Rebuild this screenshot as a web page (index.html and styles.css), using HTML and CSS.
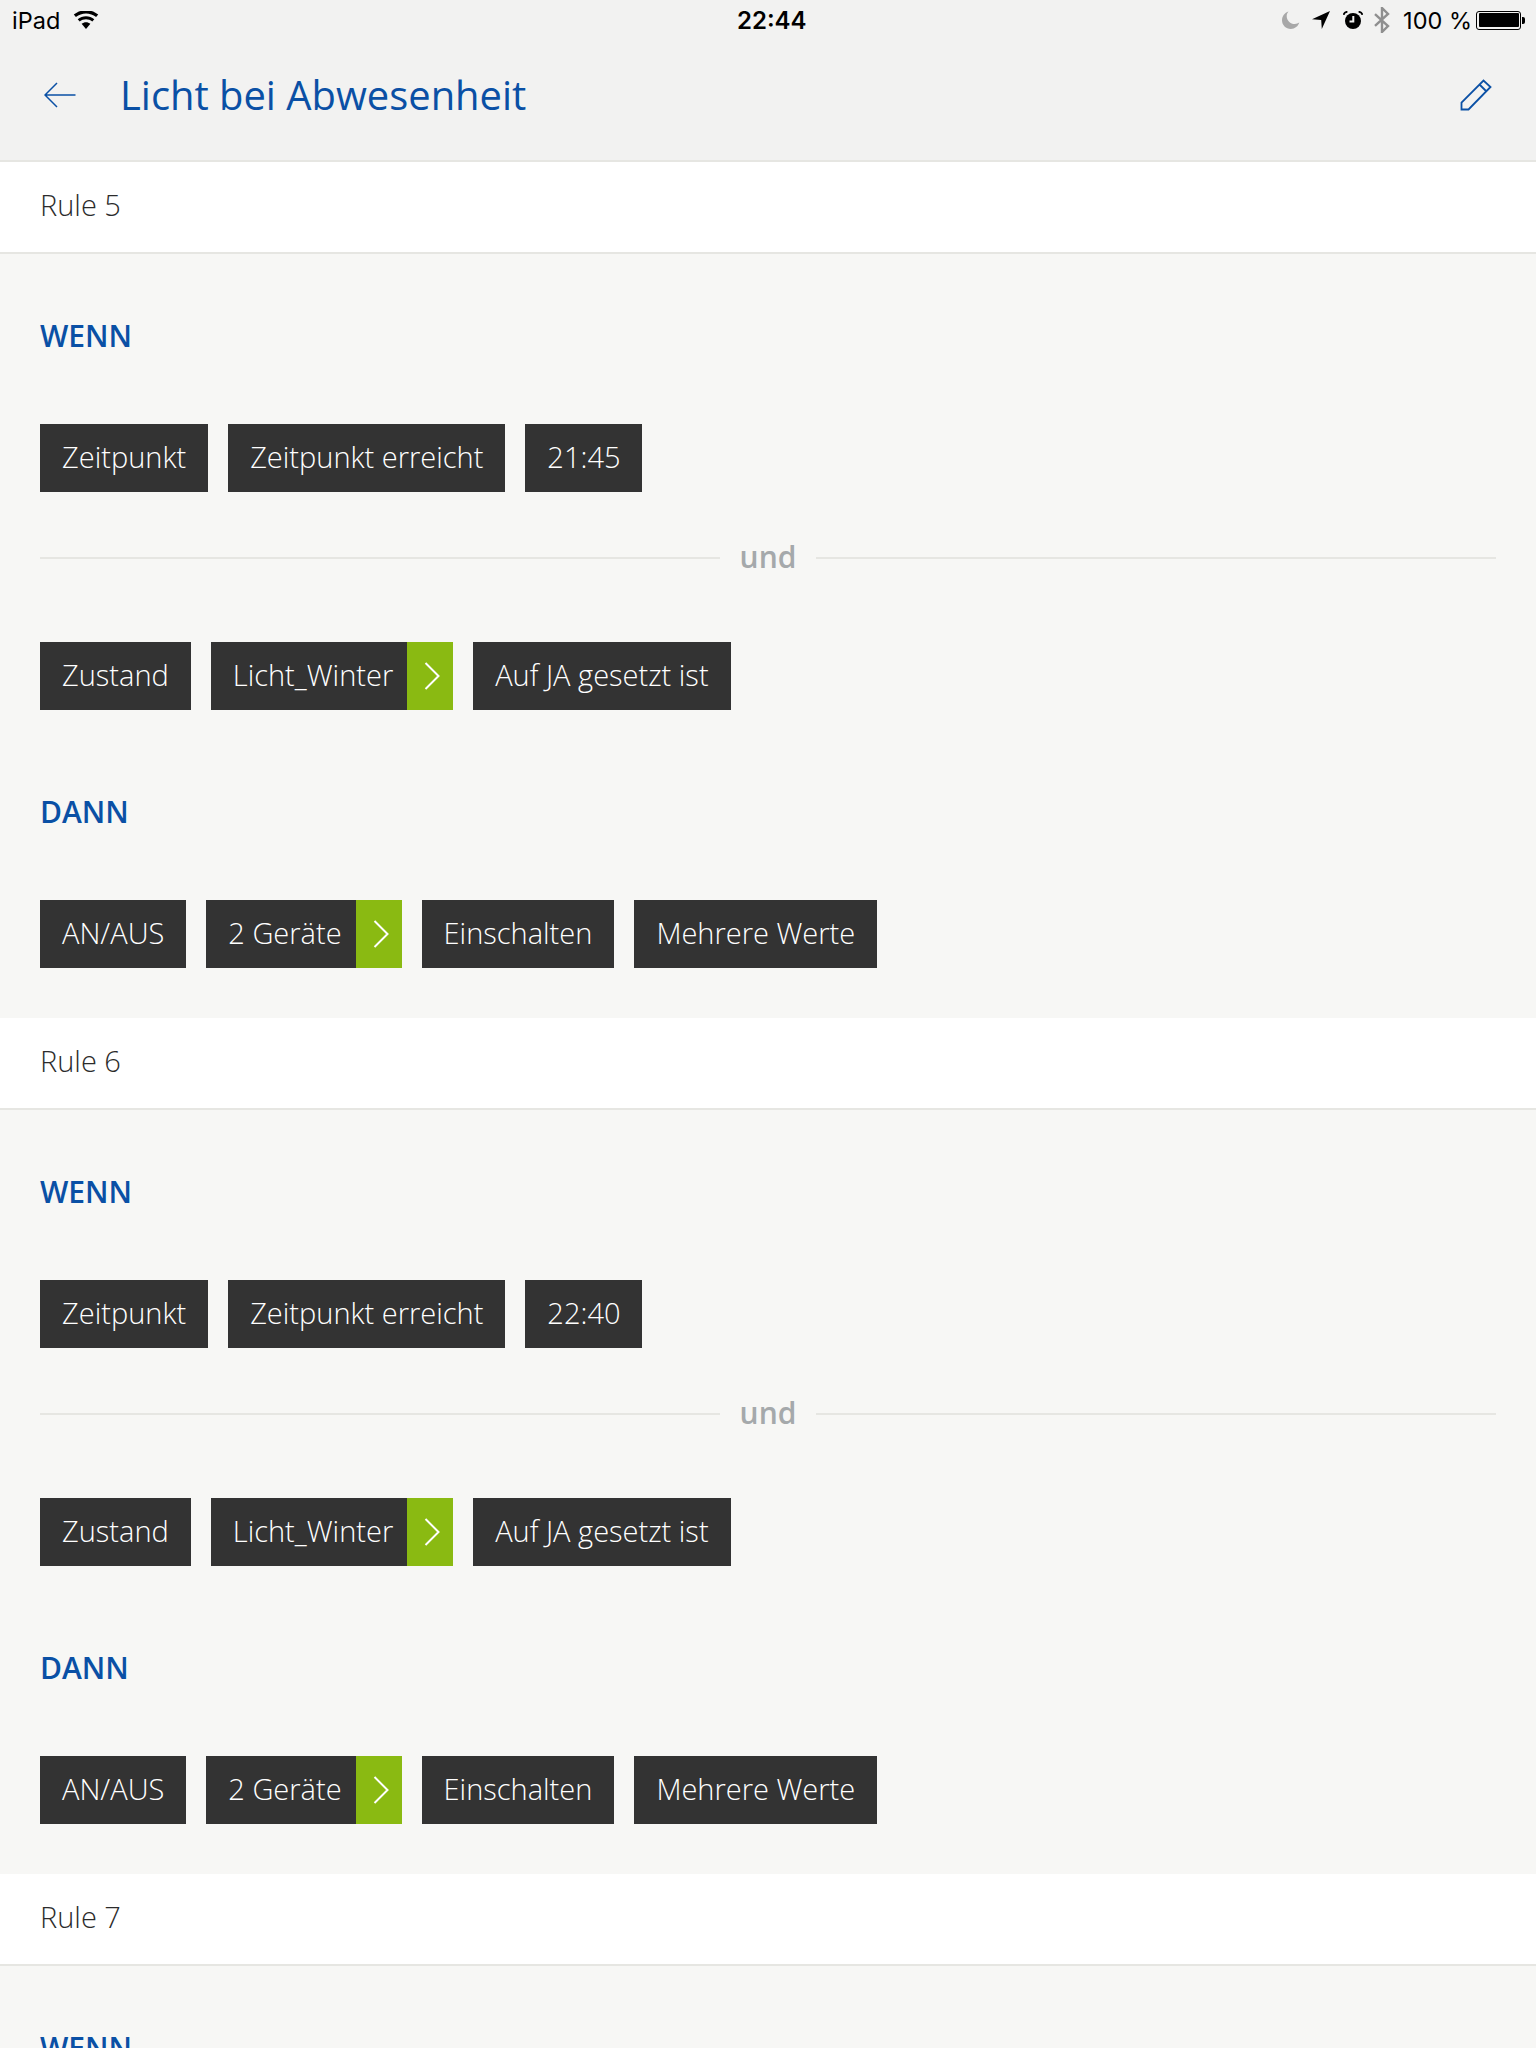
FILE: index.html
```html
<!DOCTYPE html>
<html lang="de">
<head>
<meta charset="utf-8">
<title>Licht bei Abwesenheit</title>
<link rel="stylesheet" href="styles.css">
</head>
<body>
<header class="top">
  <div class="status">
    <div class="status-left">
      <span class="carrier">iPad</span>
      <svg class="wifi" width="26" height="18" viewBox="0 0 26 18"><path d="M13 18 8.6 12.8C11.2 10.6 14.8 10.6 17.4 12.8Z"/><path d="M6.7 10.6 4.7 8.2C9.4 4.3 16.6 4.3 21.3 8.2L19.3 10.6C15.7 7.6 10.3 7.6 6.7 10.6Z"/><path d="M2.9 6 .8 3.6C7.8-2.2 18.2-2.2 25.2 3.6L23.1 6C17.3 1.2 8.7 1.2 2.9 6Z"/></svg>
    </div>
    <span class="clock">22:44</span>
    <div class="status-right">
      <svg class="moon" width="18" height="18" viewBox="0 0 18 18"><path d="M6.5.5C2.7 1.7 0 5.200 0 9.300 0 14.100 3.900 18 8.800 18 12.800 18 16.200 15.300 17.300 11.600 16 12.500 14.500 13 12.800 13 8.300 13 4.700 9.400 4.700 4.900 4.700 3.300 5.400 1.700 6.500.500Z"/></svg>
      <svg class="loc" width="18" height="18" viewBox="0 0 18 18"><path d="M18 0 0 8.300 9.200 9 9.800 18Z"/></svg>
      <svg class="alarm" width="20" height="18" viewBox="0 0 20 18"><circle cx="10" cy="10" r="8"/><path class="hand" d="M10.300 5V10.500H6.500"/><path class="bell" d="M.6 3.800C1 2 2.600.8 4.400.8M19.400 3.800C19 2 17.400.8 15.600.8"/></svg>
      <svg class="bt" width="16" height="26" viewBox="0 0 16 26"><path d="M1 7.200 14 19 8 25V1L14 7 1 18.800"/></svg>
      <span class="battery-text">100 %</span>
      <span class="battery"><span class="battery-fill"></span></span>
      <span class="battery-nub"></span>
    </div>
  </div>
  <div class="nav">
    <svg class="back" width="32" height="26" viewBox="0 0 32 26"><path d="M31.500 13H1M13 1 1 13 13 25"/></svg>
    <h1 class="title">Licht bei Abwesenheit</h1>
    <svg class="edit" width="32" height="32" viewBox="0 0 32 32"><path d="M1.500 30.500V23.500L23.500 1.500 30.500 8 8.500 30.500ZM19.500 5.500 26.500 12.500"/></svg>
  </div>
</header>
<main>
  <div class="rule-name">Rule 5</div>
  <section class="rule">
    <h2 class="label">WENN</h2>
    <div class="chips">
      <span class="chip">Zeitpunkt</span>
      <span class="chip">Zeitpunkt erreicht</span>
      <span class="chip">21:45</span>
    </div>
    <div class="sep"><span class="sep-text">und</span></div>
    <div class="chips">
      <span class="chip">Zustand</span>
      <span class="chip has-more">Licht_Winter<span class="more"><svg width="16" height="28" viewBox="0 0 16 28"><path d="M1.500 1 14.500 14 1.500 27"/></svg></span></span>
      <span class="chip">Auf JA gesetzt ist</span>
    </div>
    <h2 class="label label-then">DANN</h2>
    <div class="chips">
      <span class="chip">AN/AUS</span>
      <span class="chip has-more">2 Geräte<span class="more"><svg width="16" height="28" viewBox="0 0 16 28"><path d="M1.500 1 14.500 14 1.500 27"/></svg></span></span>
      <span class="chip">Einschalten</span>
      <span class="chip">Mehrere Werte</span>
    </div>
  </section>
  <div class="rule-name">Rule 6</div>
  <section class="rule">
    <h2 class="label">WENN</h2>
    <div class="chips">
      <span class="chip">Zeitpunkt</span>
      <span class="chip">Zeitpunkt erreicht</span>
      <span class="chip">22:40</span>
    </div>
    <div class="sep"><span class="sep-text">und</span></div>
    <div class="chips">
      <span class="chip">Zustand</span>
      <span class="chip has-more">Licht_Winter<span class="more"><svg width="16" height="28" viewBox="0 0 16 28"><path d="M1.500 1 14.500 14 1.500 27"/></svg></span></span>
      <span class="chip">Auf JA gesetzt ist</span>
    </div>
    <h2 class="label label-then">DANN</h2>
    <div class="chips">
      <span class="chip">AN/AUS</span>
      <span class="chip has-more">2 Geräte<span class="more"><svg width="16" height="28" viewBox="0 0 16 28"><path d="M1.500 1 14.500 14 1.500 27"/></svg></span></span>
      <span class="chip">Einschalten</span>
      <span class="chip">Mehrere Werte</span>
    </div>
  </section>
  <div class="rule-name">Rule 7</div>
  <section class="rule">
    <h2 class="label">WENN</h2>
  </section>
</main>
</body>
</html>
```
FILE: styles.css
```css
* { box-sizing: border-box; }
html, body { margin: 0; height: 2048px; overflow: hidden; }
body { background: #f7f7f5; font-family: "Open Sans", "Liberation Sans", sans-serif; color: #333; }

.top { height: 162px; background: #f2f2f1; border-bottom: 2px solid #e6e6e2; }

.status { position: relative; height: 40px; display: flex; align-items: center; justify-content: space-between; padding: 0 11px 0 12px; color: #000; font-family: Inter, "Liberation Sans", sans-serif; font-size: 23.500px; }
.status-left, .status-right { display: flex; align-items: center; }
.carrier { font-weight: 400; }
.wifi { margin-left: 13px; fill: #000; }
.clock { position: absolute; left: 737px; top: 6px; font-size: 24px; font-weight: 600; line-height: 29px; }
.moon { fill: #a8a8a8; }
.loc { margin-left: 12px; fill: #000; }
.alarm { margin-left: 13px; }
.alarm circle { fill: #000; }
.alarm .hand { fill: none; stroke: #f2f2f1; stroke-width: 2; }
.alarm .bell { fill: none; stroke: #000; stroke-width: 1.800; }
.bt { margin-left: 11px; fill: none; stroke: #8f8f8f; stroke-width: 2.400; }
.battery-text { margin-left: 13px; font-weight: 400; }
.battery { margin-left: 4px; width: 45px; height: 19px; border: 1.500px solid #000; border-radius: 3px; padding: 1.500px; display: flex; }
.battery-fill { flex: 1; background: #000; border-radius: 1px; }
.battery-nub { width: 3px; height: 7px; background: #000; border-radius: 0 2px 2px 0; margin-left: 1px; }

.nav { height: 120px; display: flex; align-items: center; padding: 0 44px 10px 44px; }
.back { flex: none; fill: none; stroke: #0a50a5; stroke-width: 1.500; }
.title { margin: 0 0 0 44px; flex: 1; font-size: 39.900px; font-weight: 400; line-height: 56px; color: #0a50a5; }
.edit { flex: none; fill: none; stroke: #0a50a5; stroke-width: 1.800; }

.rule-name { height: 92px; background: #fff; border-bottom: 2px solid #e6e6e2; padding: 0 40px; font-size: 29px; font-weight: 300; line-height: 86px; color: #2b2b2b; }
.rule { padding: 62px 40px 50px; }

.label { margin: 0 0 68px; font-size: 30px; font-weight: 600; line-height: 40px; color: #0a50a5; }
.label-then { margin-top: 82px; }

.chips { display: flex; gap: 20px; }
.chip { height: 68px; display: flex; align-items: center; padding: 0 22px 3px; background: #333; color: #fff; font-size: 29px; font-weight: 300; white-space: nowrap; }
.has-more { padding-right: 0; }
.more { align-self: stretch; width: 46px; margin: 0 0 -3px 14px; padding-left: 4px; background: #8aba12; display: flex; align-items: center; justify-content: center; }
.more svg { fill: none; stroke: #fff; stroke-width: 2; }

.sep { display: flex; align-items: center; gap: 20px; height: 40px; margin: 46px 0 64px; font-size: 30px; font-weight: 600; color: #a5a9ab; }
.sep::before, .sep::after { content: ""; flex: 1; height: 2px; background: #e6e6e2; }
.sep-text { margin-bottom: 3px; }
```
